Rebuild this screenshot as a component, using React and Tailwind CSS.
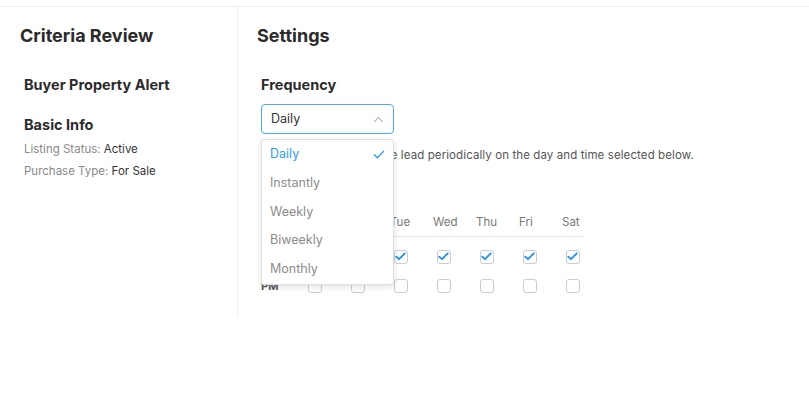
import React from 'react';

const days = ['Sun', 'Mon', 'Tue', 'Wed', 'Thu', 'Fri', 'Sat'];
const options = ['Daily', 'Instantly', 'Weekly', 'Biweekly', 'Monthly'];

const Box = ({ checked }) => (
  <div className="w-[14px] h-[14px] rounded-[3px] border border-[#c9ccd1] bg-white flex items-center justify-center">
    {checked && (
      <svg width="11" height="9" viewBox="0 0 11 9" fill="none">
        <path d="M1.2 4.6 L4 7.2 L9.8 1.4" stroke="#1a90f0" strokeWidth="1.8" strokeLinecap="round" strokeLinejoin="round" />
      </svg>
    )}
  </div>
);

const App = () => {
  return (
    <div className="w-[809px] h-[409px] bg-white pt-[6px]" style={{ fontFamily: 'Inter, "Liberation Sans", sans-serif' }}>
      <div className="border-t border-[#eeeff1] flex h-[310px]">
        {/* Criteria Review */}
        <div className="w-[238px] border-r border-[#eeeff1] pl-5 pt-[19px]">
          <h2 className="text-[18px] font-bold text-[#2b2b2b] leading-[20px]">Criteria Review</h2>
          <div className="pl-1 pt-[30px]">
            <h3 className="text-[14.5px] font-bold text-[#2b2b2b] leading-[18px]">Buyer Property Alert</h3>
            <h3 className="text-[14.5px] font-bold text-[#2b2b2b] leading-[18px] mt-[22px]">Basic Info</h3>
            <p className="text-[11.5px] text-[#8a8a8a] mt-[8px] leading-[15px]">
              Listing Status: <span className="text-[#333]">Active</span>
            </p>
            <p className="text-[11.5px] text-[#8a8a8a] mt-[7px] leading-[15px]">
              Purchase Type: <span className="text-[#333]">For Sale</span>
            </p>
          </div>
        </div>

        {/* Settings */}
        <div className="flex-1 pl-[19px] pt-[19px]">
          <h2 className="text-[18px] font-bold text-[#2b2b2b] leading-[20px]">Settings</h2>
          <div className="pl-1 pt-[30px]">
            <h3 className="text-[14.5px] font-bold text-[#2b2b2b] leading-[18px]">Frequency</h3>
            <div className="relative mt-[10px]">
              <div className="w-[133px] h-[30px] rounded-[4px] border border-[#49a9ee] flex items-center justify-between px-[9px]">
                <span className="text-[12.5px] text-[#333]">Daily</span>
                <svg width="11" height="7" viewBox="0 0 11 7" fill="none">
                  <path d="M1 6 L5.5 1.5 L10 6" stroke="#b5b8bd" strokeWidth="1.1" />
                </svg>
              </div>
              <p className="text-[11.5px] tracking-[0.1px] text-[#555] mt-[14px] leading-[15px] whitespace-nowrap">
                Emails will be sent to the lead periodically on the day and time selected below.
              </p>
              <p className="text-[12px] font-semibold text-[#333] mt-[17px]">Schedule</p>

              {/* Day table */}
              <div className="mt-[16px] w-[322px]">
                <div className="grid grid-cols-[32px_repeat(7,43px)] border-b border-[#e4e5e7] pb-[5px] text-[11.5px] text-[#777]">
                  <span></span>
                  {days.map((d) => (
                    <span key={d} className="pl-[11px]">{d}</span>
                  ))}
                </div>
                <div className="grid grid-cols-[32px_repeat(7,43px)] items-center h-[29px] mt-[5px]">
                  <span className="text-[11px] font-bold text-[#555]">AM</span>
                  {days.map((d) => (
                    <div key={d} className="flex justify-center"><Box checked /></div>
                  ))}
                </div>
                <div className="grid grid-cols-[32px_repeat(7,43px)] items-center h-[29px]">
                  <span className="text-[11px] font-bold text-[#555]">PM</span>
                  {days.map((d) => (
                    <div key={d} className="flex justify-center"><Box /></div>
                  ))}
                </div>
              </div>

              {/* Open dropdown */}
              <div className="absolute left-0 top-[35px] w-[133px] bg-white border border-[#dcdee2] rounded-[3px] shadow-[0_2px_6px_rgba(0,0,0,0.12)]">
                {options.map((o, i) => (
                  <div key={o} className="h-[28.8px] flex items-center justify-between px-[8px]">
                    <span className={i === 0 ? 'text-[12.5px] text-[#2d9bf0]' : 'text-[12.5px] text-[#8c8c8c]'}>{o}</span>
                    {i === 0 && (
                      <svg width="12" height="9" viewBox="0 0 12 9" fill="none">
                        <path d="M1 4.5 L4.3 7.8 L11 1" stroke="#2d9bf0" strokeWidth="1.3" />
                      </svg>
                    )}
                  </div>
                ))}
              </div>
            </div>
          </div>
        </div>
      </div>
    </div>
  );
};

export default App;
